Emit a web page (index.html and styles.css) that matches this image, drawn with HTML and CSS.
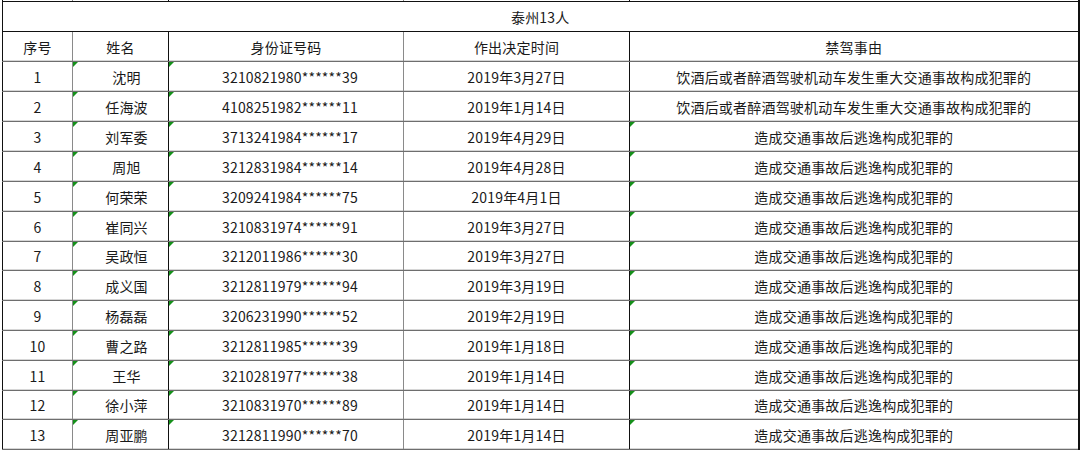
FILE: index.html
```html
<!DOCTYPE html>
<html lang="zh-CN">
<head>
<meta charset="utf-8">
<title>泰州13人</title>
<link rel="stylesheet" href="styles.css">
</head>
<body>
<div class="sheet">
<table class="grid">
<colgroup>
<col class="c-no"><col class="c-name"><col class="c-id"><col class="c-date"><col class="c-reason">
</colgroup>
<tbody>
<tr class="stub"><td></td><td class="bk"></td><td class="gr"></td><td class="bk"></td><td></td></tr>
<tr class="title"><td colspan="5">泰州13人</td></tr>
<tr class="head"><td>序号</td><td class="bk">姓名</td><td class="gr">身份证号码</td><td class="bk">作出决定时间</td><td>禁驾事由</td></tr>
<tr><td>1</td><td class="bk flag nm">沈明</td><td class="gr flag id">3210821980******39</td><td class="bk">2019年3月27日</td><td>饮酒后或者醉酒驾驶机动车发生重大交通事故构成犯罪的</td></tr>
<tr><td>2</td><td class="bk flag nm">任海波</td><td class="gr flag id">4108251982******11</td><td class="bk">2019年1月14日</td><td>饮酒后或者醉酒驾驶机动车发生重大交通事故构成犯罪的</td></tr>
<tr><td>3</td><td class="bk flag nm">刘军委</td><td class="gr flag id">3713241984******17</td><td class="bk">2019年4月29日</td><td class="flag">造成交通事故后逃逸构成犯罪的</td></tr>
<tr><td>4</td><td class="bk flag nm">周旭</td><td class="gr flag id">3212831984******14</td><td class="bk">2019年4月28日</td><td class="flag">造成交通事故后逃逸构成犯罪的</td></tr>
<tr><td>5</td><td class="bk flag nm">何荣荣</td><td class="gr flag id">3209241984******75</td><td class="bk">2019年4月1日</td><td class="flag">造成交通事故后逃逸构成犯罪的</td></tr>
<tr><td>6</td><td class="bk flag nm">崔同兴</td><td class="gr flag id">3210831974******91</td><td class="bk">2019年3月27日</td><td class="flag">造成交通事故后逃逸构成犯罪的</td></tr>
<tr class="short"><td>7</td><td class="bk flag nm">吴政恒</td><td class="gr flag id">3212011986******30</td><td class="bk">2019年3月27日</td><td class="flag">造成交通事故后逃逸构成犯罪的</td></tr>
<tr><td>8</td><td class="bk flag nm">成义国</td><td class="gr flag id">3212811979******94</td><td class="bk">2019年3月19日</td><td class="flag">造成交通事故后逃逸构成犯罪的</td></tr>
<tr><td>9</td><td class="bk flag nm">杨磊磊</td><td class="gr flag id">3206231990******52</td><td class="bk">2019年2月19日</td><td class="flag">造成交通事故后逃逸构成犯罪的</td></tr>
<tr><td>10</td><td class="bk flag nm">曹之路</td><td class="gr flag id">3212811985******39</td><td class="bk">2019年1月18日</td><td class="flag">造成交通事故后逃逸构成犯罪的</td></tr>
<tr><td>11</td><td class="bk flag nm">王华</td><td class="gr flag id">3210281977******38</td><td class="bk">2019年1月14日</td><td class="flag">造成交通事故后逃逸构成犯罪的</td></tr>
<tr class="short"><td>12</td><td class="bk flag nm">徐小萍</td><td class="gr flag id">3210831970******89</td><td class="bk">2019年1月14日</td><td class="flag">造成交通事故后逃逸构成犯罪的</td></tr>
<tr><td>13</td><td class="bk flag nm">周亚鹏</td><td class="gr flag id">3212811990******70</td><td class="bk">2019年1月14日</td><td class="flag">造成交通事故后逃逸构成犯罪的</td></tr>
</tbody>
</table>
</div>
</body>
</html>
```
FILE: styles.css
```css
html, body {
  margin: 0;
  padding: 0;
  background: #ffffff;
}
body {
  width: 1080px;
  height: 454px;
  overflow: hidden;
}
.sheet {
  padding-left: 2px;
  margin-top: -1px;
}
.grid {
  border-collapse: collapse;
  table-layout: fixed;
  width: 1076px;
  font-family: "Noto Sans CJK SC", "Liberation Sans", sans-serif;
  font-size: 14px;
  color: #1a1a1a;
  border-left: 1px solid #111;
  border-right: 2px solid #111;
}
.c-no { width: 70px; }
.c-name { width: 96px; }
.c-id { width: 235px; }
.c-date { width: 226px; }
.c-reason { width: 449px; }
.grid td {
  height: 29px;
  padding: 0;
  text-align: center;
  vertical-align: middle;
  white-space: nowrap;
  letter-spacing: 0.2px;
  border-bottom: 1px solid #6e6e6e;
  box-shadow: inset 0 -1px 0 #d6d6d6;
  position: relative;
  line-height: 16px;
}
.grid td.nm { padding-left: 12px; }
.grid td.id { padding-left: 8px; }
.grid tr.short td { height: 28px; }
.grid tr.stub td {
  height: 2px;
  border-bottom: 1px solid #111;
  box-shadow: none;
}
.grid tr.title td {
  border-bottom: 1px solid #111;
  box-shadow: none;
}
.grid td.bk {
  border-left: 1px solid #8a8a8a;
  border-right: 1px solid #111;
}
.grid td.gr {
  border-right: 1px solid #8a8a8a;
}
.grid tr.head td.bk,
.grid tr.stub td.bk {
  border-left: 1px solid #8a8a8a;
}
.flag::before {
  content: "";
  position: absolute;
  left: 0;
  top: 0;
  width: 0;
  height: 0;
  border-top: 5px solid #15901a;
  border-right: 5px solid transparent;
}
```
